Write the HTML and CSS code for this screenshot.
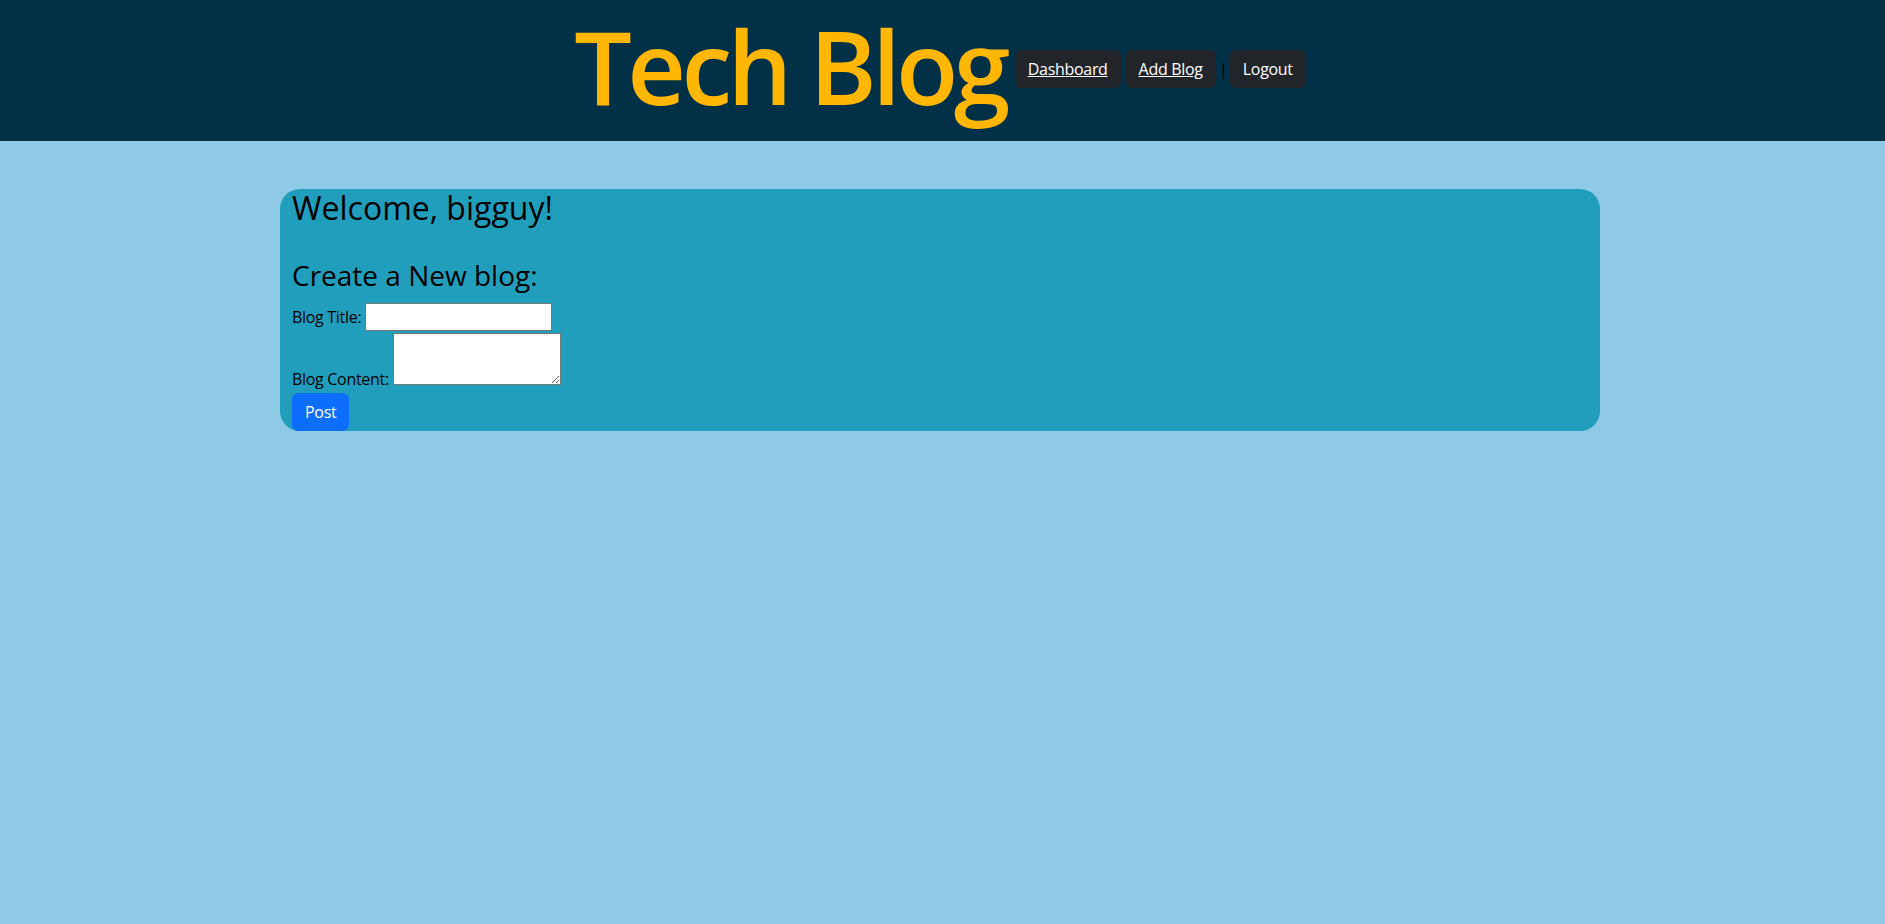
FILE: index.html
```html
<!DOCTYPE html>
<html lang="en">
<head>
<meta charset="utf-8">
<title>Tech Blog</title>
<link rel="stylesheet" href="styles.css">
</head>
<body>
<header class="site-header">
  <h1 class="brand">Tech Blog</h1>
  <nav class="nav">
    <a class="nav-btn nav-link" href="#">Dashboard</a>
    <a class="nav-btn nav-link" href="#">Add Blog</a>
    <span class="nav-sep">|</span>
    <button class="nav-btn" type="button">Logout</button>
  </nav>
</header>
<div class="page">
  <main class="panel">
    <h2 class="welcome">Welcome, bigguy!</h2>
    <h3 class="create-title">Create a New blog:</h3>
    <form class="blog-form">
      <div class="form-row"><label for="title">Blog Title:</label> <input id="title" class="title-input" type="text"></div>
      <div class="form-row"><label for="content">Blog Content:</label> <textarea id="content" class="content-input"></textarea></div>
      <div class="form-row"><button class="post-btn" type="submit">Post</button></div>
    </form>
  </main>
</div>
</body>
</html>
```

FILE: styles.css
```css
* { box-sizing: border-box; }
html, body { margin: 0; padding: 0; }
body {
  background: #8ecae6;
  font-family: "Open Sans", "Noto Sans", sans-serif;
  font-size: 16px;
  line-height: 1.5;
  letter-spacing: -0.3px;
  color: #000;
}
.site-header {
  background: #023047;
  height: 141px;
  padding-right: 5px;
  display: flex;
  justify-content: center;
  align-items: center;
}
.brand {
  margin: 0 9px 8px 0;
  font-size: 102px;
  font-weight: 600;
  letter-spacing: -0.045em;
  line-height: 1.2;
  color: #ffb703;
}
.nav {
  display: flex;
  align-items: center;
  margin-bottom: 3px;
}
.nav-btn {
  display: inline-block;
  background: #212529;
  color: #fff;
  border: 1px solid #212529;
  border-radius: 6px;
  padding: 6px 12px;
  font-family: inherit;
  font-size: 16px;
  line-height: 24px;
  letter-spacing: -0.3px;
  cursor: pointer;
}
.nav-link { text-decoration: underline; margin-right: 5px; }
.nav-sep {
  display: inline-flex;
  justify-content: center;
  width: 5px;
  margin-right: 4px;
  color: #000;
}
.page { padding-right: 5px; }
.panel {
  width: 1320px;
  margin: 48px auto 0;
  background: #219ebc;
  border-radius: 20px;
  padding: 0 12px;
}
.welcome {
  margin: 0 0 32px 0;
  font-size: 32px;
  font-weight: 500;
  line-height: 1.2;
  letter-spacing: normal;
}
.create-title {
  margin: 0 0 8px 0;
  font-size: 28px;
  font-weight: 500;
  line-height: 1.2;
  letter-spacing: normal;
}
.blog-form { margin: 0; padding-top: 2px; }
.title-input {
  width: 187px;
  height: 28px;
  border: 1px solid #767676;
  padding: 1px 2px;
  font-family: inherit;
  font-size: 16px;
  line-height: 24px;
  margin: 0;
}
.content-input {
  width: 168px;
  height: 52px;
  border: 1px solid #767676;
  padding: 1px 2px;
  font-family: inherit;
  font-size: 16px;
  line-height: 24px;
  margin: 0;
}
.form-row + .form-row { margin-top: 2px; }
.post-btn {
  background: #0d6efd;
  color: #fff;
  border: 1px solid #0d6efd;
  border-radius: 6px;
  padding: 6px 12px;
  font-family: inherit;
  font-size: 16px;
  line-height: 24px;
  letter-spacing: -0.3px;
  vertical-align: top;
}
```
